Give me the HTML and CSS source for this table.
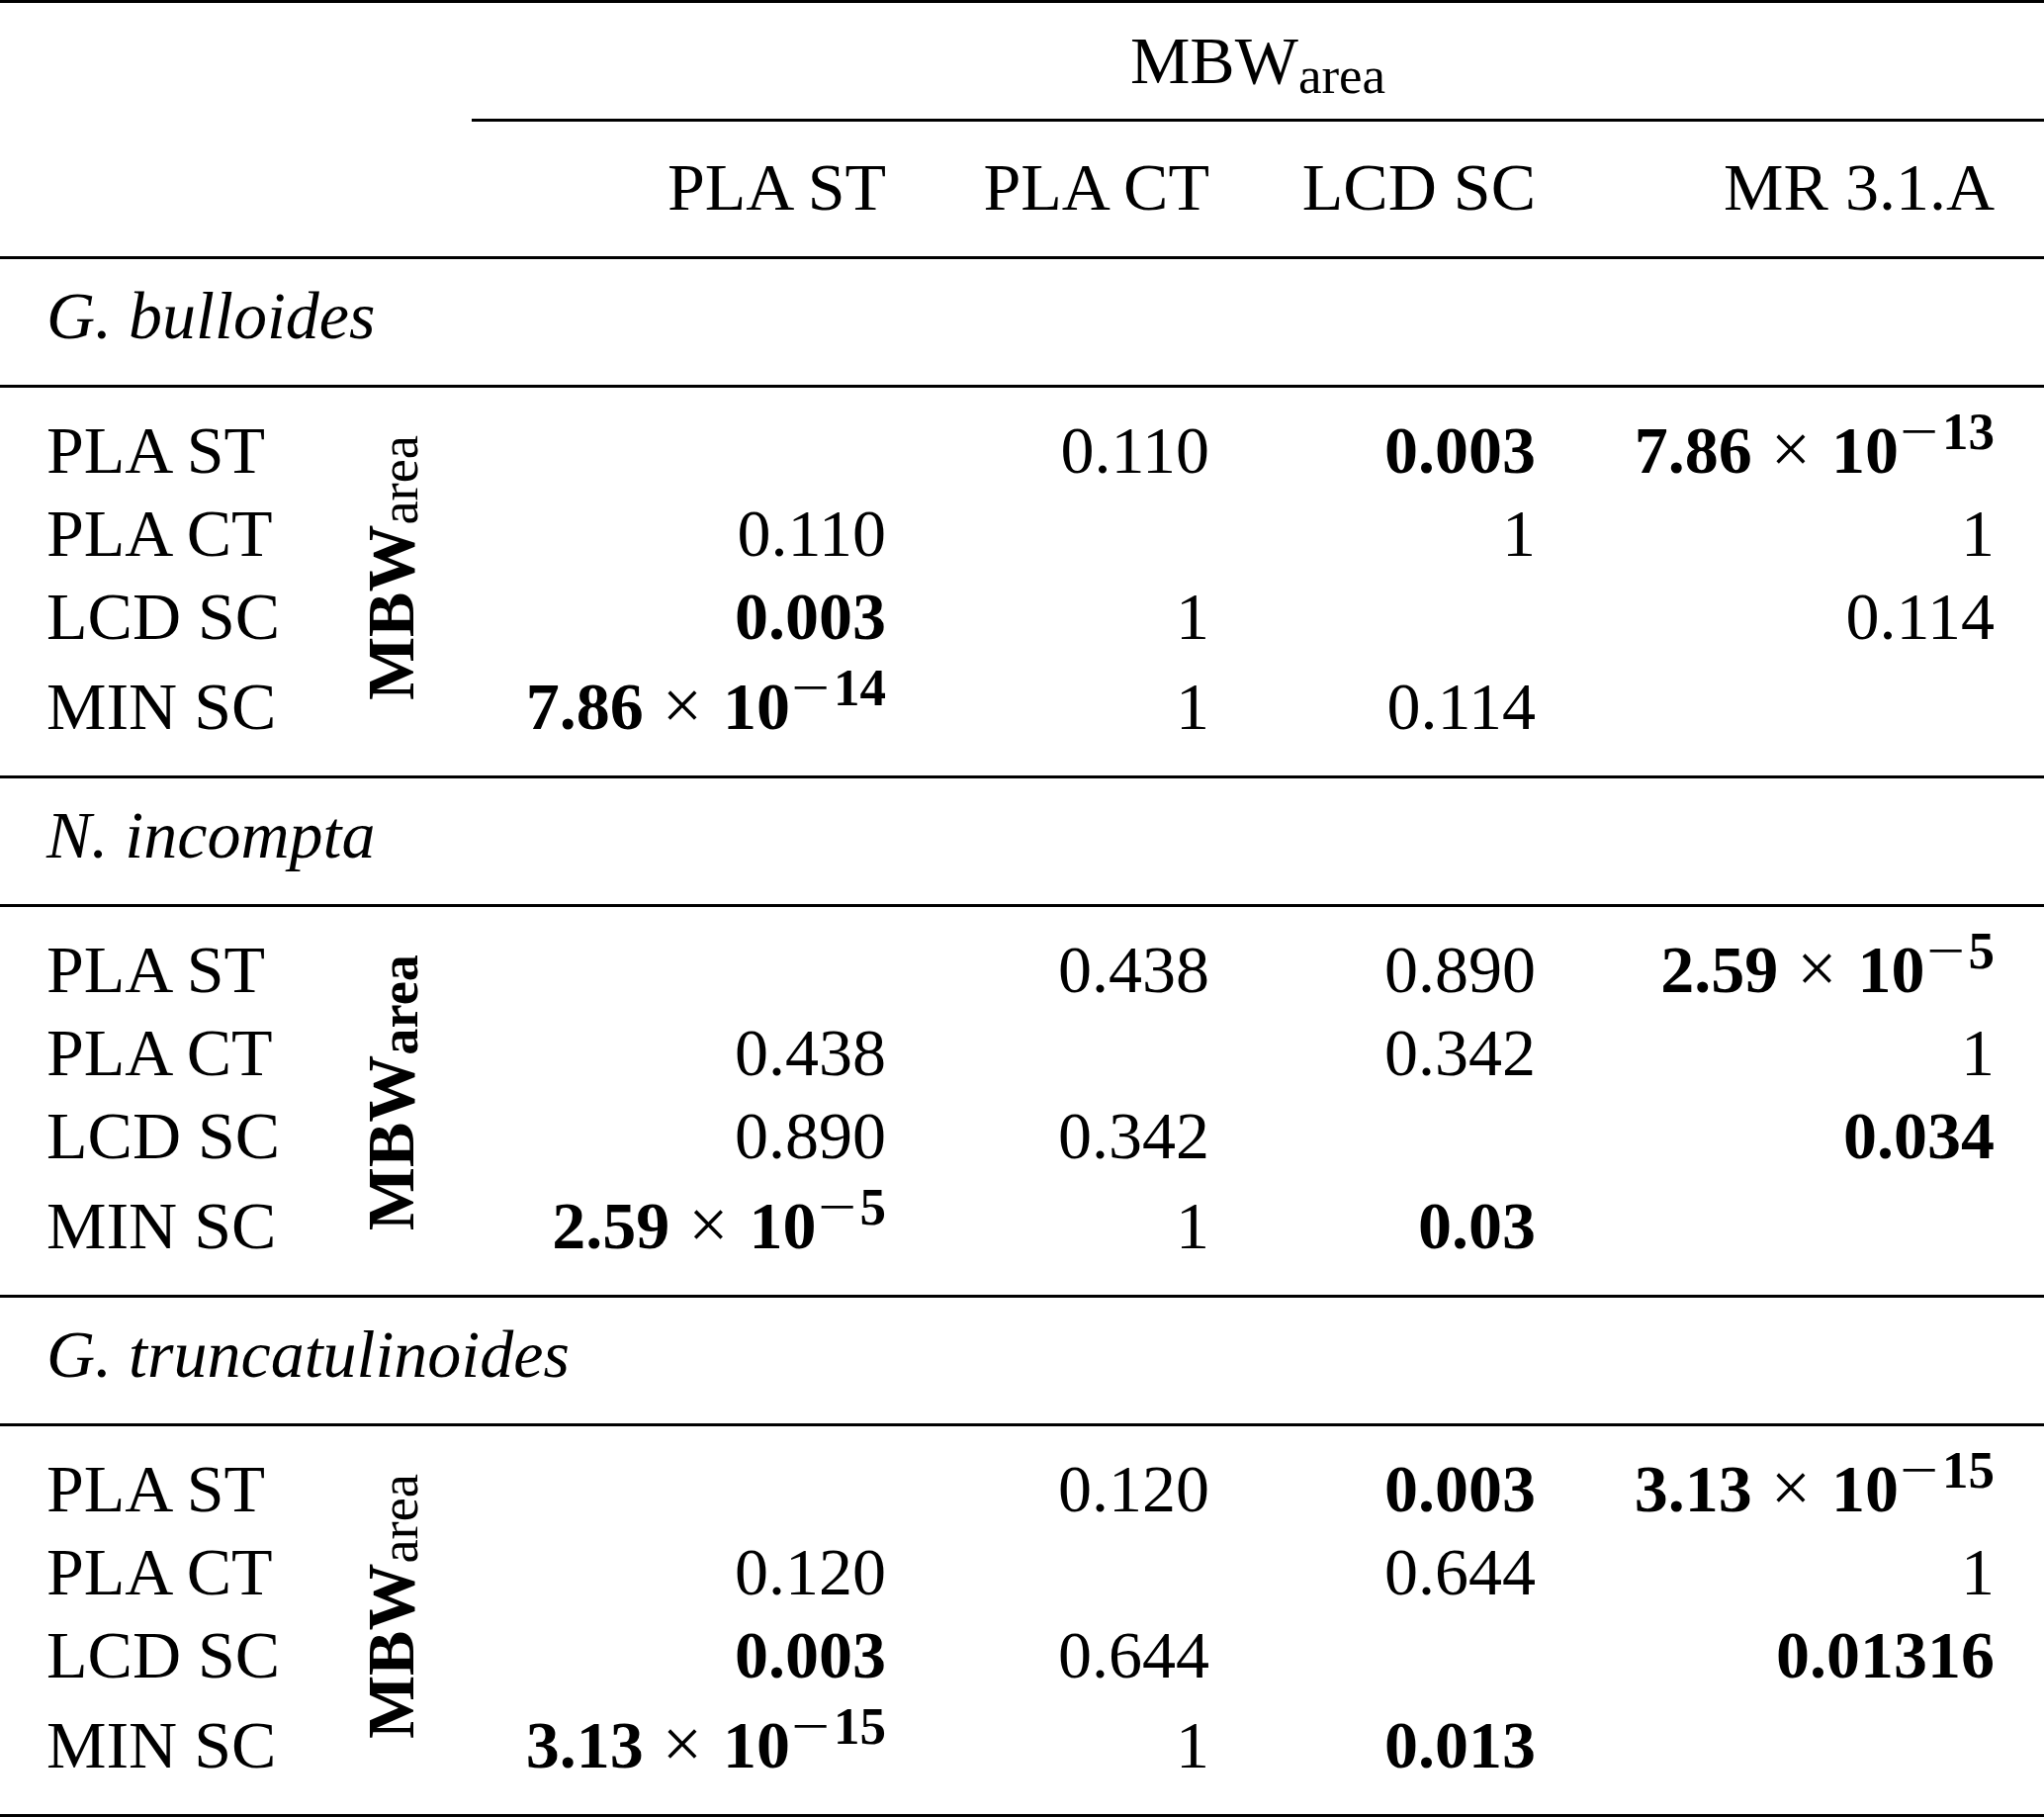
FILE: index.html
```html
<!DOCTYPE html>
<html>
<head>
<meta charset="utf-8">
<title>MBW area table</title>
<link rel="stylesheet" href="styles.css">
</head>
<body>
<table class="tbl">
  <colgroup>
    <col class="w-lab"><col class="w-rot"><col class="w-c1"><col class="w-c2"><col class="w-c3"><col class="w-c4">
  </colgroup>
  <thead>
    <tr class="h1">
      <th class="blank" colspan="2"></th>
      <th class="span" colspan="4">MBW<sub class="hsub">area</sub></th>
    </tr>
    <tr class="h2">
      <th class="blank" colspan="2"></th>
      <th>PLA ST</th><th>PLA CT</th><th>LCD SC</th><th>MR 3.1.A</th>
    </tr>
  </thead>
  <tbody>
    <tr class="grp"><td colspan="6"><i>G. bulloides</i></td></tr>
    <tr class="r1">
      <td class="lab">PLA ST</td>
      <td class="rot" rowspan="4"><div class="vlabel">MBW<sub class="vsub">area</sub></div></td>
      <td></td><td>0.110</td><td class="b">0.003</td>
      <td class="b">7.86<span class="x">×</span>10<sup><span class="m">−</span>13</sup></td>
    </tr>
    <tr class="r2"><td class="lab">PLA CT</td><td>0.110</td><td></td><td>1</td><td>1</td></tr>
    <tr class="r3"><td class="lab">LCD SC</td><td class="b">0.003</td><td>1</td><td></td><td>0.114</td></tr>
    <tr class="r4">
      <td class="lab">MIN SC</td>
      <td class="b">7.86<span class="x">×</span>10<sup><span class="m">−</span>14</sup></td>
      <td>1</td><td>0.114</td><td></td>
    </tr>

    <tr class="grp"><td colspan="6"><i>N. incompta</i></td></tr>
    <tr class="r1">
      <td class="lab">PLA ST</td>
      <td class="rot" rowspan="4"><div class="vlabel">MBW<sub class="vsub bold">area</sub></div></td>
      <td></td><td>0.438</td><td>0.890</td>
      <td class="b">2.59<span class="x">×</span>10<sup><span class="m">−</span>5</sup></td>
    </tr>
    <tr class="r2"><td class="lab">PLA CT</td><td>0.438</td><td></td><td>0.342</td><td>1</td></tr>
    <tr class="r3"><td class="lab">LCD SC</td><td>0.890</td><td>0.342</td><td></td><td class="b">0.034</td></tr>
    <tr class="r4">
      <td class="lab">MIN SC</td>
      <td class="b">2.59<span class="x">×</span>10<sup><span class="m">−</span>5</sup></td>
      <td>1</td><td class="b">0.03</td><td></td>
    </tr>

    <tr class="grp"><td colspan="6"><i>G. truncatulinoides</i></td></tr>
    <tr class="r1">
      <td class="lab">PLA ST</td>
      <td class="rot" rowspan="4"><div class="vlabel">MBW<sub class="vsub">area</sub></div></td>
      <td></td><td>0.120</td><td class="b">0.003</td>
      <td class="b">3.13<span class="x">×</span>10<sup><span class="m">−</span>15</sup></td>
    </tr>
    <tr class="r2"><td class="lab">PLA CT</td><td>0.120</td><td></td><td>0.644</td><td>1</td></tr>
    <tr class="r3"><td class="lab">LCD SC</td><td class="b">0.003</td><td>0.644</td><td></td><td class="b">0.01316</td></tr>
    <tr class="r4">
      <td class="lab">MIN SC</td>
      <td class="b">3.13<span class="x">×</span>10<sup><span class="m">−</span>15</sup></td>
      <td>1</td><td class="b">0.013</td><td></td>
    </tr>
  </tbody>
</table>
</body>
</html>
```

FILE: styles.css
```css
html, body {
  margin: 0;
  padding: 0;
  background: #ffffff;
}

body {
  font-family: "Liberation Serif", "Times New Roman", serif;
  color: #000000;
}

.tbl {
  border-collapse: separate;
  border-spacing: 0;
  width: 2067px;
  table-layout: fixed;
  border-top: 3px solid #000;
}

.w-lab { width: 360px; }
.w-rot { width: 117px; }
.w-c1 { width: 469px; }
.w-c2 { width: 327px; }
.w-c3 { width: 330px; }
.w-c4 { width: 464px; }

.tbl th,
.tbl td {
  padding: 0 50px 0 0;
  font-size: 68px;
  line-height: 84px;
  font-weight: normal;
  text-align: right;
  vertical-align: baseline;
  white-space: nowrap;
}

/* header */
.h1 th {
  padding-top: 16px;
  padding-bottom: 17px;
}
.h1 th.span {
  padding-left: 0;
  padding-right: 0;
  text-align: center;
  border-bottom: 3px solid #000;
}
.h1 th.blank {
  padding-bottom: 20px;
}
.hsub {
  font-size: 0.78em;
  line-height: 0;
  vertical-align: -10px;
}

.h2 th {
  padding-top: 24px;
  padding-bottom: 28px;
  border-bottom: 3px solid #000;
}

/* group label rows */
.grp td {
  text-align: left;
  padding: 15px 0 28px 47px;
  border-bottom: 3px solid #000;
}

/* section rows */
.r1 td { padding-top: 21px; }
.r4 td {
  padding-top: 7px;
  padding-bottom: 28px;
  border-bottom: 3px solid #000;
}

.tbl td.lab {
  text-align: left;
  padding-left: 47px;
  padding-right: 0;
}

.b {
  font-weight: bold !important;
}

.x {
  font-weight: normal;
  font-size: 1.05em;
  line-height: 0;
  margin: 0 21px 0 19px;
}

sup {
  font-size: 0.78em;
  line-height: 0;
  vertical-align: 24px;
}

.m {
  display: inline-block;
  font-weight: normal;
  line-height: 0;
  transform: scaleX(1.3);
  margin: 0 8px 0 6px;
}

/* rotated multirow label */
.tbl td.rot {
  vertical-align: top;
  text-align: left;
  padding: 48px 0 0 1px;
  border-bottom: 3px solid #000;
}
.vlabel {
  display: inline-block;
  writing-mode: vertical-rl;
  transform: rotate(180deg);
  font-weight: bold;
  font-size: 68px;
  line-height: 68px;
  white-space: nowrap;
}
.vsub {
  font-weight: normal;
  font-size: 0.8em;
  line-height: 0;
  vertical-align: -9px;
}
.vsub.bold {
  font-weight: bold;
}
```
